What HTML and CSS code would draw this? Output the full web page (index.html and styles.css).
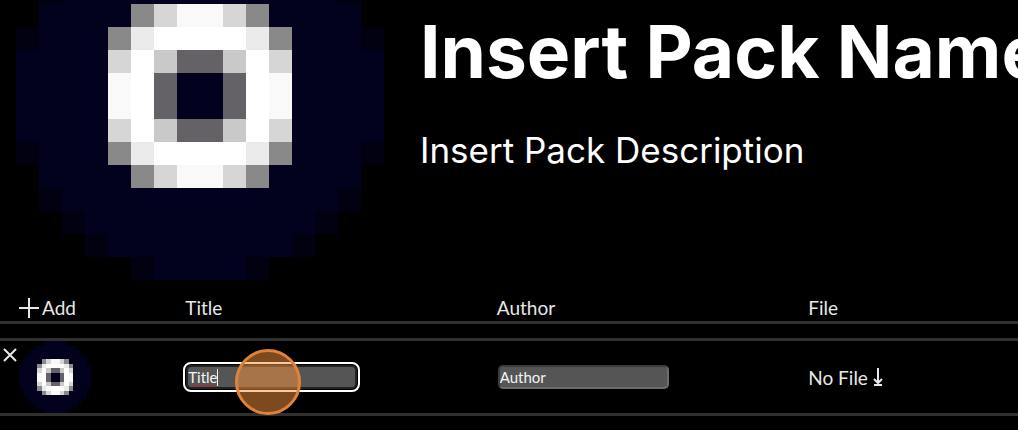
FILE: index.html
```
<!DOCTYPE html>
<html lang="en">
<head>
<meta charset="utf-8">
<title>Pack editor</title>
<link rel="stylesheet" href="styles.css">
</head>
<body>
<svg class="defs" aria-hidden="true">
  <symbol id="disc" viewBox="0 0 16 16" shape-rendering="crispEdges">
    <path fill="#020112" d="M5 0h6v1H5zM3 1h10v1H3zM2 2h12v1H2zM1 3h14v1H1zM0 5h16v6H0zM1 12h14v1H1zM2 13h12v1H2zM3 14h10v1H3zM5 15h6v1H5z"/>
    <path fill="#02021e" d="M6 0h4v1H6zM4 1h8v1H4zM3 2h10v1H3zM2 3h12v1H2zM1 4h14v8H1zM0 6h16v4H0zM2 12h12v1H2zM3 13h10v1H3zM4 14h8v1H4zM6 15h4v1H6z"/>
    <path fill="#fff" d="M6 5h4v1H6zM5 6h1v4H5zM10 6h1v4h-1zM6 10h4v1H6z"/>
    <path fill="#f9f9f9" d="M7 4h2v1H7zM4 7h1v2H4zM11 7h1v2h-1zM7 11h2v1H7z"/>
    <path fill="#ebebeb" d="M5 5h1v1H5zM10 5h1v1h-1zM5 10h1v1H5zM10 10h1v1h-1z"/>
    <path fill="#d6d6d6" d="M6 4h1v1H6zM9 4h1v1H9zM4 6h1v1H4zM11 6h1v1h-1zM4 9h1v1H4zM11 9h1v1h-1zM6 11h1v1H6zM9 11h1v1H9z"/>
    <path fill="#c9c9c9" d="M6 6h1v1H6zM9 6h1v1H9zM6 9h1v1H6zM9 9h1v1H9z"/>
    <path fill="#898989" d="M5 4h1v1H5zM10 4h1v1h-1zM4 5h1v1H4zM11 5h1v1h-1zM4 10h1v1H4zM11 10h1v1h-1zM5 11h1v1H5zM10 11h1v1h-1z"/>
    <path fill="#646267" d="M7 6h2v1H7zM6 7h1v2H6zM9 7h1v2H9zM7 9h2v1H7z"/>
  </symbol>
</svg>
<header class="pack">
  <svg class="cover" role="img" aria-label="Pack icon"><use href="#disc"/></svg>
  <div class="info">
    <h1 class="name">Insert Pack Name</h1>
    <p class="description">Insert Pack Description</p>
  </div>
</header>
<table class="tracks">
  <thead>
    <tr>
      <th class="col-add"><button class="add" type="button"><svg class="plus" viewBox="0 0 20 20" aria-hidden="true"><path d="M10 0v20M0 10h20"/></svg>Add</button></th>
      <th class="col-wide">Title</th>
      <th class="col-wide">Author</th>
      <th>File</th>
    </tr>
  </thead>
  <tbody>
    <tr>
      <td>
        <div class="thumb">
          <button class="remove" type="button" aria-label="Remove"><svg class="cross" viewBox="0 0 14 14" aria-hidden="true"><path d="M1 1l12 12M13 1L1 13"/></svg></button>
          <svg class="icon" role="img" aria-label="Track icon"><use href="#disc"/></svg>
        </div>
      </td>
      <td>
        <div class="field">
          <input class="text active" type="text" value="Title" aria-label="Title">
          <svg class="squiggle" viewBox="0 0 26 4" aria-hidden="true"><path d="M0 3l2-2 2 2 2-2 2 2 2-2 2 2 2-2 2 2 2-2 2 2 2-2 2 2"/></svg>
          <span class="caret"></span>
          <span class="click"></span>
        </div>
      </td>
      <td><div class="field"><input class="text" type="text" value="Author" aria-label="Author"></div></td>
      <td><button class="file" type="button">No File<svg class="arrow" viewBox="0 0 10 18" aria-hidden="true"><path d="M5 0v15M1 11l4 4 4-4M1 17h8"/></svg></button></td>
    </tr>
  </tbody>
</table>
</body>
</html>
```
FILE: styles.css
```
body {
  margin: 0;
  background: #000;
  color: #fff;
  font-family: Inter, "Liberation Sans", sans-serif;
  overflow: hidden;
}
.defs {
  position: absolute;
  width: 0;
  height: 0;
}
.pack {
  display: flex;
  gap: 36px;
  padding-left: 16px;
}
.cover {
  flex: none;
  width: 368px;
  height: 368px;
  margin-top: -88px;
}
.info {
  padding-top: 6px;
}
.name {
  margin: 0;
  font-size: 73px;
  line-height: 92px;
  font-weight: 700;
  white-space: nowrap;
}
.description {
  margin: 30px 0 0;
  font-size: 35px;
  line-height: 44px;
}
.tracks {
  width: 100%;
  table-layout: fixed;
  border-collapse: separate;
  border-spacing: 0 14px;
  font-family: Lato, "Liberation Sans", sans-serif;
  font-size: 19px;
  line-height: 27px;
  color: #e8e8e8;
}
.tracks th,
.tracks td {
  padding: 0;
  text-align: left;
  font-weight: 400;
  border-bottom: 3px solid #303030;
}
.tracks td {
  border-top: 3px solid #303030;
}
.tracks .col-add {
  width: 18.2%;
}
.tracks .col-wide {
  width: 30.6%;
}
button {
  padding: 0;
  border: 0;
  background: none;
  color: inherit;
  font: inherit;
  cursor: pointer;
}
.add {
  display: flex;
  align-items: center;
  gap: 3px;
  margin-left: 19px;
}
.plus {
  width: 20px;
  height: 20px;
}
.plus path,
.cross path,
.arrow path {
  fill: none;
  stroke: #e8e8e8;
  stroke-width: 2;
}
.thumb {
  display: flex;
  align-items: flex-start;
  gap: 2px;
  padding-left: 3px;
}
.remove {
  display: flex;
  margin-top: 7px;
}
.cross {
  width: 14px;
  height: 14px;
}
.icon {
  width: 72px;
  height: 72px;
}
.field {
  position: relative;
  display: flex;
  padding-left: 1px;
}
.text {
  box-sizing: border-box;
  width: 171px;
  height: 24px;
  padding: 0;
  border: 2px solid;
  border-color: #3c3c3c #6c6c6c #6c6c6c #3c3c3c;
  border-radius: 5px;
  background: #555;
  color: #f4f4f4;
  font-family: Lato, "Liberation Sans", sans-serif;
  font-size: 15px;
  outline: none;
}
.active {
  border-color: #222;
  outline: 2px solid #fff;
  outline-offset: 1px;
}
.squiggle {
  position: absolute;
  left: 7px;
  bottom: 1px;
  width: 26px;
  height: 4px;
}
.squiggle path {
  fill: none;
  stroke: #b3202a;
}
.caret {
  position: absolute;
  left: 32px;
  top: 4px;
  width: 1px;
  height: 17px;
  background: #fff;
}
.click {
  position: absolute;
  left: 50px;
  top: -16px;
  box-sizing: border-box;
  width: 66px;
  height: 66px;
  border: 3px solid #e08238;
  border-radius: 50%;
  background: rgba(250, 148, 64, 0.5);
}
.file {
  display: flex;
  align-items: center;
  gap: 5px;
}
.arrow {
  width: 10px;
  height: 18px;
}
```
